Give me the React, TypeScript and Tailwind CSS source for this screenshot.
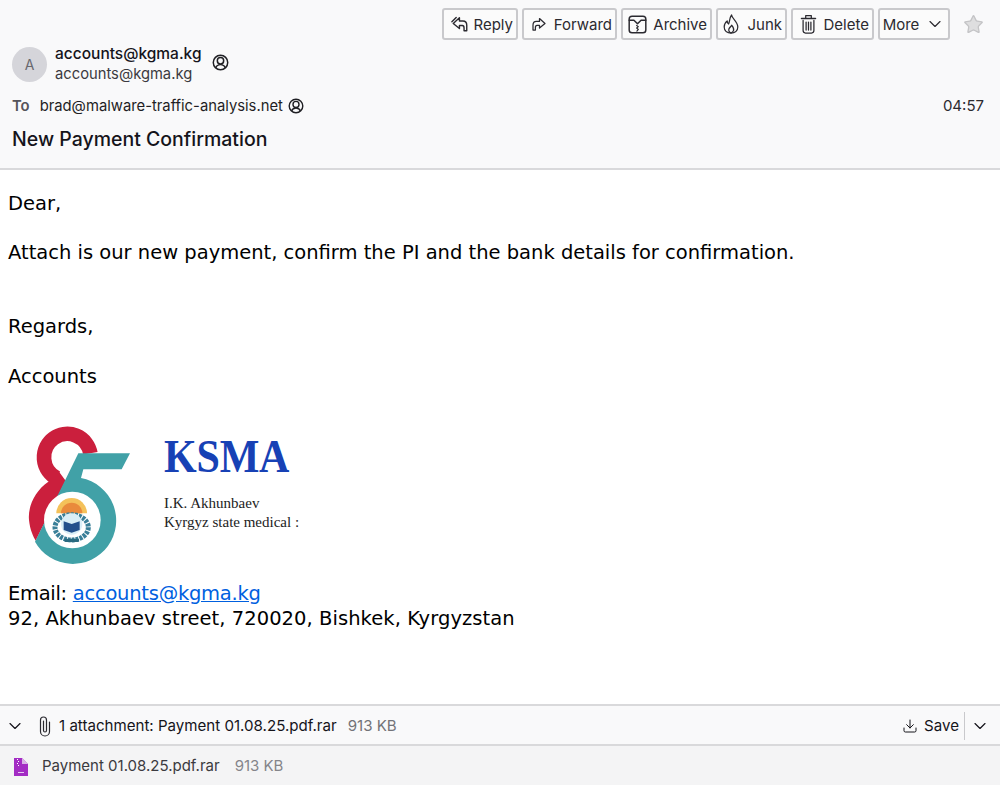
import { ChevronDown, Download, Star } from 'lucide-react';
import type { ReactNode } from 'react';

function Ico({ w, h, vw = 16, vh = 16, children }: { w: number; h: number; vw?: number; vh?: number; children: ReactNode }) {
  return (
    <svg width={w} height={h} viewBox={`0 0 ${vw} ${vh}`} fill="none" stroke="#2b2a30" strokeWidth="1.25" strokeLinejoin="round" strokeLinecap="round" className="shrink-0">
      {children}
    </svg>
  );
}

const ARROW = 'M7.5 2.5 2 7.5 7.5 12V9.4H10c1 0 1.6 1 1.6 2.2V14H14V9.2C14 7 12.6 5.4 10.6 5.4H7.5Z';

const ACTIONS = [
  {
    label: 'Reply',
    w: 'w-[76px]',
    gap: 'gap-[5px]',
    icon: <Ico w={18} h={18}><path d={ARROW} /><path d="M4.6 2.2 0.8 6" /></Ico>,
  },
  {
    label: 'Forward',
    w: 'w-[95px]',
    gap: 'gap-[7px]',
    icon: <Ico w={16} h={16}><g transform="matrix(-1 0 0 1 16 0)"><path d={ARROW} /></g></Ico>,
  },
  {
    label: 'Archive',
    w: 'w-[91px]',
    gap: 'gap-[6px]',
    icon: (
      <Ico w={19} h={19}>
        <rect x="1" y="1" width="14" height="14" rx="2.4" />
        <path d="M1 4.4H5L8 7.4 11 4.4H15" />
        <path d="M7.3 8.8 8.7 9.8 7.3 11 8.7 12.2 7.5 13.6" strokeWidth="1" />
      </Ico>
    ),
  },
  {
    label: 'Junk',
    w: 'w-[71px]',
    gap: 'gap-[8px]',
    icon: (
      <Ico w={16} h={20} vw={16} vh={20}>
        <path d="M8.6 1C8.8 4.6 14.8 7.6 14.8 13 14.8 16.8 11.8 19 8 19 4.2 19 1.2 16.8 1.2 13 1.2 10.6 2.4 8.4 4.2 7 4.2 8.4 4.6 9.4 5.6 10 6.8 7.6 6.4 3.8 8.6 1Z" />
        <path d="M8 19C6 18.4 5.4 16.4 6 14.8 6.6 13.4 8 12.6 8.6 11.2 10 13 11.2 14.4 10.6 16.4 10.2 17.8 9.2 18.6 8 19Z" />
      </Ico>
    ),
  },
  {
    label: 'Delete',
    w: 'w-[83px]',
    gap: 'gap-[7px]',
    icon: (
      <Ico w={17} h={20} vw={16} vh={20}>
        <path d="M1 4.4H15" strokeWidth="1.5" />
        <path d="M5.2 4V1.6H10.8V4" />
        <path d="M2.6 6.4V16.6C2.6 18 3.6 19 5 19H11C12.4 19 13.4 18 13.4 16.6V6.4" />
        <path d="M5.6 8V16M8 8V16M10.4 8V16" />
      </Ico>
    ),
  },
];

function ContactIcon({ className }: { className?: string }) {
  return (
    <svg viewBox="0 0 16 16" className={className} fill="none" stroke="#1f1f23" strokeWidth="1.4">
      <circle cx="8" cy="8" r="6.8" />
      <circle cx="8" cy="6.4" r="3" />
      <path d="M3.6 13c.6-2 2-3 4.4-3s3.8 1 4.4 3" />
    </svg>
  );
}

function Logo() {
  return (
    <svg viewBox="0 0 375 450" className="w-[125px] h-[150px] shrink-0">
      <path d="M226 100A70 70 0 1 0 125 174" fill="none" stroke="#cb1f3d" strokeWidth="44" />
      <path d="M100 185C60 212 38 260 42 300 45 330 55 350 62 362L100 285 152 182 132 155Z" fill="#cb1f3d" />
      <path d="M190 100H345L320 148H205L198 174A130 130 0 1 1 60 365Z" fill="#41a1a7" />
      <circle cx="172" cy="300" r="85" fill="#fff" />
      <path d="M124 280A46 46 0 0 1 216 280Z" fill="#f4c15a" />
      <path d="M138 280A32 32 0 0 1 202 280Z" fill="#e98a3c" />
      <ellipse cx="170" cy="322" rx="50" ry="38" fill="none" stroke="#3a7f98" strokeWidth="15" strokeDasharray="9 3" />
      <circle cx="170" cy="312" r="32" fill="#d9eef7" />
      <path d="M146 304 170 312 194 304V330L170 338 146 330Z" fill="#24508c" />
      <rect x="148" y="356" width="44" height="10" rx="4" fill="#2a6a80" />
    </svg>
  );
}

export default function App() {
  return (
    <div className="w-[1000px] h-[785px] flex flex-col bg-white overflow-hidden font-['Inter',sans-serif] text-[#15141a]">
      <header className="h-[170px] shrink-0 bg-[#f9f9fa] border-b-2 border-[#d9d9db] px-3">
        <div className="flex justify-end items-center gap-[4px] pt-2 pr-[5px]">
          {ACTIONS.map((a) => (
            <button key={a.label} className={`${a.w} ${a.gap} h-[32px] flex items-center justify-end pr-[3px] rounded-[3px] border-2 border-[#c9c9cc] bg-[#fbfbfb] text-[15px] text-[#2b2a30]`}>
              {a.icon}
              <span className="mt-[2px]">{a.label}</span>
            </button>
          ))}
          <button className="w-[72px] h-[32px] flex items-center justify-center gap-[6px] rounded-[3px] border-2 border-[#c9c9cc] bg-[#fbfbfb] text-[15px] text-[#2b2a30]">
            <span className="mt-[2px]">More</span>
            <ChevronDown size={20} strokeWidth={1.4} />
          </button>
          <Star size={21} strokeWidth={1.5} className="ml-[9px] mr-[-1px] fill-[#dededf] text-[#c4c4c6]" />
        </div>
        <div className="flex items-center mt-[2px] h-[44px]">
          <div className="w-[35px] h-[35px] rounded-full bg-[#d5d5da] flex items-center justify-center text-[14px] text-[#68686e]">A</div>
          <div className="ml-2 leading-[20px]">
            <div className="text-[15.5px] font-medium text-[#15141a]">accounts@kgma.kg</div>
            <div className="text-[14.75px] text-[#3b3a40]">accounts@kgma.kg</div>
          </div>
          <ContactIcon className="w-[17px] h-[17px] ml-[10px] mb-[3px]" />
        </div>
        <div className="flex items-center mt-[8px] h-[24px] text-[14.8px]">
          <span className="font-semibold text-[#55545a]">To</span>
          <span className="ml-[10px] text-[#1f1e24]">brad@malware-traffic-analysis.net</span>
          <ContactIcon className="w-[16px] h-[16px] ml-[5px]" />
          <span className="ml-auto mr-[4px] text-[15px] text-[#2b2a30]">04:57</span>
        </div>
        <div className="mt-[7px] text-[19.5px] leading-[28px] font-medium text-[#15141a]">New Payment Confirmation</div>
      </header>

      <main className="flex-1 pl-2 pt-[21.6px] font-['DejaVu_Sans',sans-serif] text-[19.5px] leading-[24.75px] text-black">
        <p>Dear,</p>
        <p className="mt-[24.75px]">Attach is our new payment, confirm the PI and the bank details for confirmation.</p>
        <p className="mt-[49.5px]">Regards,</p>
        <p className="mt-[24.75px]">Accounts</p>
        <div className="mt-[20px] w-[292px] h-[172px] flex items-start overflow-hidden">
          <div className="mt-[10.4px] ml-[7px]"><Logo /></div>
          <div className="font-['Liberation_Serif',serif] ml-[24px] text-[#222]">
            <div className="mt-[23px] text-[42px] leading-[48px] font-bold text-[#1741b5] tracking-[-0.2px] scale-y-110">KSMA</div>
            <div className="mt-[13px] text-[15px] leading-[19px] whitespace-nowrap">I.K. Akhunbaev</div>
            <div className="text-[15px] leading-[19px] whitespace-nowrap">Kyrgyz state medical :</div>
          </div>
        </div>
        <p><span className="tracking-[-0.3px]">Email: </span><a className="text-[#0060df] underline tracking-[-0.25px]">accounts@kgma.kg</a></p>
        <p className="mt-px tracking-[0.06px]">92, Akhunbaev street, 720020, Bishkek, Kyrgyzstan</p>
      </main>

      <div className="h-[42px] shrink-0 flex items-center pt-[2px] bg-[#f9f9fa] border-y-2 border-[#d9d9db] text-[15.1px] text-[#15141a]">
        <ChevronDown size={20} strokeWidth={1.4} className="ml-[5px]" />
        <svg width="14" height="22" viewBox="0 0 14 22" fill="none" stroke="#2b2a30" strokeWidth="1.2" strokeLinecap="round" className="ml-[13px]">
          <path d="M11.5 7V16.5A4.5 4.5 0 0 1 2.5 16.5V5A3 3 0 0 1 8.5 5V15.5A1.5 1.5 0 0 1 5.5 15.5V6" />
        </svg>
        <span className="ml-[7px]">1 attachment: Payment 01.08.25.pdf.rar</span>
        <span className="ml-[11px] text-[#737378]">913 KB</span>
        <Download size={16} strokeWidth={1.5} className="ml-auto" />
        <span className="ml-[6px]">Save</span>
        <span className="ml-[5px] h-[28px] w-px bg-[#c9c9cc]" />
        <ChevronDown size={20} strokeWidth={1.4} className="ml-[5px] mr-[10px]" />
      </div>
      <div className="h-[39px] shrink-0 flex items-center pt-[2px] bg-[#f4f4f5] text-[15px] text-[#3b3a40]">
        <svg viewBox="0 0 16 20" className="w-[16px] h-[20px] ml-[13px]">
          <path d="M1 1h8l6 6v12H1z" fill="#a32cc4" />
          <path d="M9 1l6 6H9z" fill="#d9b3e6" />
          <path d="M4 2h1v1H4zM5 4h1v1H5zM4 6h1v1H4zM5 8h1v1H5z" fill="#fff" />
          <rect x="5" y="15" width="6" height="1" fill="#e8c8f0" />
        </svg>
        <span className="ml-[13px]">Payment 01.08.25.pdf.rar</span>
        <span className="ml-[15px] text-[#85858a]">913 KB</span>
      </div>
    </div>
  );
}
